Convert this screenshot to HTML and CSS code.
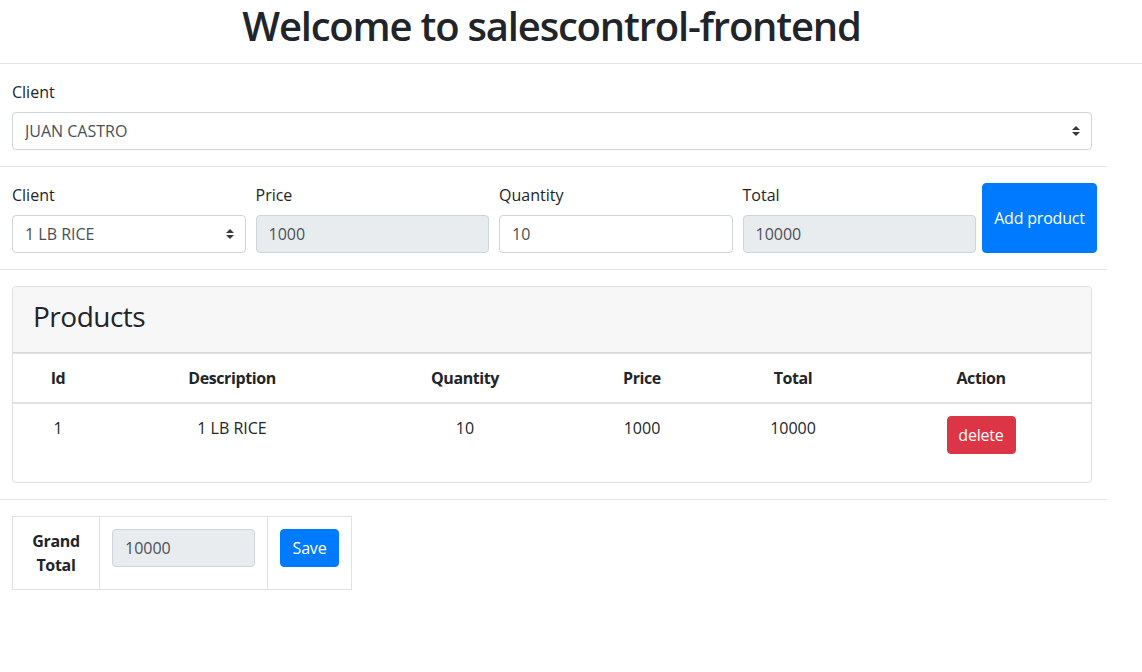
FILE: index.html
```html
<!DOCTYPE html>
<html lang="en">
<head>
<meta charset="utf-8">
<title>salescontrol-frontend</title>
<link rel="stylesheet" href="styles.css">
</head>
<body>
<header class="top">
  <h1 class="title">Welcome to salescontrol-frontend</h1>
</header>
<hr class="rule rule-full">
<main class="main">
  <div class="field client-field">
    <label class="label">Client</label>
    <div class="select-wrap">
      <select class="control select"><option>JUAN CASTRO</option></select>
      <svg class="select-arrow" viewBox="0 0 4 5" width="8" height="10"><path d="M2 0L0 2h4zm0 5L0 3h4z" fill="#343a40"/></svg>
    </div>
  </div>
  <hr class="rule">
  <div class="product-row">
    <div class="field">
      <label class="label">Client</label>
      <div class="select-wrap">
        <select class="control select"><option>1 LB RICE</option></select>
        <svg class="select-arrow" viewBox="0 0 4 5" width="8" height="10"><path d="M2 0L0 2h4zm0 5L0 3h4z" fill="#343a40"/></svg>
      </div>
    </div>
    <div class="field">
      <label class="label">Price</label>
      <input class="control" type="text" value="1000" disabled>
    </div>
    <div class="field">
      <label class="label">Quantity</label>
      <input class="control" type="text" value="10">
    </div>
    <div class="field">
      <label class="label">Total</label>
      <input class="control" type="text" value="10000" disabled>
    </div>
    <button class="btn btn-primary btn-add" type="button">Add product</button>
  </div>
  <hr class="rule">
  <section class="card">
    <div class="card-header"><h3 class="card-title">Products</h3></div>
    <table class="table">
      <colgroup>
        <col class="c-id"><col class="c-desc"><col class="c-qty"><col class="c-price"><col class="c-total"><col class="c-action">
      </colgroup>
      <thead>
        <tr><th>Id</th><th>Description</th><th>Quantity</th><th>Price</th><th>Total</th><th>Action</th></tr>
      </thead>
      <tbody>
        <tr><td>1</td><td>1 LB RICE</td><td>10</td><td>1000</td><td>10000</td><td><button class="btn btn-danger btn-delete" type="button">delete</button></td></tr>
      </tbody>
    </table>
  </section>
  <hr class="rule">
  <table class="totals">
    <tr>
      <th class="totals-label">Grand Total</th>
      <td><input class="control totals-input" type="text" value="10000" disabled></td>
      <td><button class="btn btn-primary btn-save" type="button">Save</button></td>
    </tr>
  </table>
</main>
</body>
</html>
```
FILE: styles.css
```css
* { box-sizing: border-box; }
html, body { margin: 0; padding: 0; background: #fff; }
body {
  font-family: "Open Sans", "Noto Sans", sans-serif;
  font-size: 16px;
  line-height: 24px;
  color: #212529;
}
.top { width: 1103px; height: 63px; padding-top: 2px; }
.title {
  margin: 0;
  font-size: 40px;
  line-height: 48px;
  font-weight: 600;
  letter-spacing: -1.2px;
  text-align: center;
}
.rule { margin: 16px 0; border: 0; border-top: 1px solid #e5e5e5; height: 0; }
.rule-full { margin: 0; width: 100%; }
.main { width: 1107px; padding: 16px 0 0 12px; }
.main > .rule { margin-left: -12px; }
.client-field { width: 1080px; margin-bottom: 16px; }
.field { display: flex; flex-direction: column; }
.label { display: block; margin-bottom: 8px; line-height: 24px; }
.control {
  display: block;
  width: 100%;
  height: 38px;
  padding: 6px 12px;
  font: inherit;
  font-size: 16px;
  line-height: 24px;
  color: #495057;
  background: #fff;
  border: 1px solid #ced4da;
  border-radius: 4px;
  outline: none;
}
.control:disabled { background: #e9ecef; color: #495057; opacity: 1; }
.select-wrap { position: relative; }
.select { appearance: none; -webkit-appearance: none; padding-right: 28px; }
.select-arrow { position: absolute; right: 12px; top: 14px; }
.product-row {
  display: grid;
  grid-template-columns: repeat(4, 233.5px) 115px;
  column-gap: 10px;
}
.btn {
  display: inline-block;
  font: inherit;
  font-size: 16px;
  line-height: 24px;
  padding: 6px 12px;
  border: 1px solid transparent;
  border-radius: 4px;
  color: #fff;
  cursor: pointer;
  text-align: center;
}
.btn-primary { background: #007bff; border-color: #007bff; }
.btn-danger { background: #dc3545; border-color: #dc3545; }
.btn-add { margin-left: -4px; height: 70px; width: 115px; padding: 6px 4px; letter-spacing: -0.2px; }
.btn-delete { width: 69px; padding: 6px 4px; letter-spacing: -0.2px; }
.btn-save { width: 59px; padding: 6px 4px; letter-spacing: -0.2px; }
.card {
  width: 1080px;
  border: 1px solid rgba(0,0,0,.125);
  border-radius: 4px;
  overflow: hidden;
}
.card-header {
  background: #f7f7f7;
  padding: 13px 20px 12px;
  border-bottom: 1px solid rgba(0,0,0,.125);
}
.card-title { margin: 0 0 7px; font-size: 28px; line-height: 33px; font-weight: 400; letter-spacing: -0.5px; }
.table { width: 100%; border-collapse: collapse; margin-bottom: 16px; table-layout: fixed; }
.c-id { width: 90px; } .c-desc { width: 258px; } .c-qty { width: 208px; }
.c-price { width: 146px; } .c-total { width: 156px; } .c-action { width: 220px; }
.table th, .table td {
  padding: 12px;
  text-align: center;
  vertical-align: top;
  border-top: 1px solid #dee2e6;
}
.table th { vertical-align: bottom; border-bottom: 2px solid #dee2e6; font-weight: 700; letter-spacing: -0.4px; }
.totals { border-collapse: collapse; }
.totals th, .totals td { border: 1px solid #dee2e6; padding: 12px; vertical-align: top; }
.totals-label { width: 87px; text-align: center; font-weight: 700; letter-spacing: -0.3px; }
.totals-input { width: 143px; }
```
